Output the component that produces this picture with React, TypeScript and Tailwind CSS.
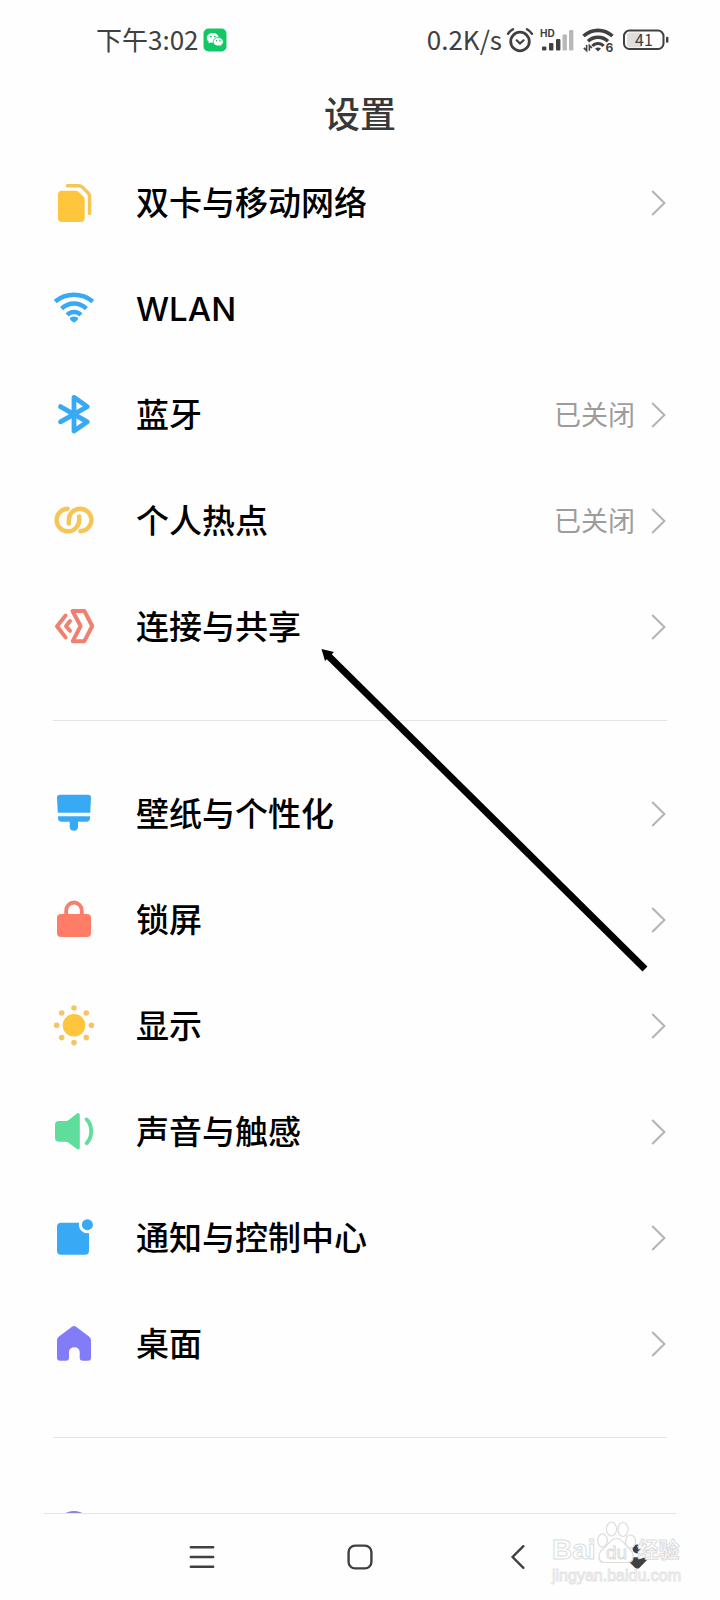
import type { ReactNode } from "react";

const BLUE = "#38aaf5";
const YELLOW = "#ffc53d";
const GOLD = "#f6c555";
const CORAL = "#ff7d66";
const GREEN = "#5fdd9d";
const PURPLE = "#837cf8";

function Icon({ children }: { children: ReactNode }) {
  return (
    <svg
      viewBox="0 0 42 42"
      className="size-[42px] shrink-0"
      fill="none"
      strokeLinecap="round"
      strokeLinejoin="round"
      aria-hidden="true"
    >
      {children}
    </svg>
  );
}

const SimIcon = () => (
  <Icon>
    <path
      d="M9 8.7H22.8Q24.5 8.7 25.7 9.9L30.5 14.6Q31.7 15.8 31.7 17.5V36Q31.7 40 27.7 40H9Q5 40 5 36V12.7Q5 8.7 9 8.7Z"
      fill={YELLOW}
    />
    <path d="M14.5 3.7H26Q27.8 3.7 29 4.9L35.2 11Q36.6 12.5 36.6 14.4V31.5" stroke={GOLD} strokeWidth="3.4" />
  </Icon>
);

const WifiIcon = () => (
  <Icon>
    <g stroke={BLUE} strokeWidth="4.5" strokeLinecap="butt">
      <path d="M2.2 13.4Q10.5 6.8 21 6.8T39.8 13.4" />
      <path d="M8.6 20.6Q14 15.4 21 15.4T33.4 20.6" />
      <path d="M14.2 27Q17 24 21 24T27.8 27" />
    </g>
    <path d="M17 29.8Q21 27.4 25 29.8Q25.6 31 24 32.4L21 34.8L18 32.4Q16.4 31 17 29.8Z" fill={BLUE} />
  </Icon>
);

const BluetoothIcon = () => (
  <Icon>
    <path
      d="M7.5 12.6L34.3 27.8L21 36.9V3.3L34.3 12.6L7.5 27.8"
      stroke={BLUE}
      strokeWidth="4.8"
    />
  </Icon>
);

const HotspotIcon = () => (
  <Icon>
    <g stroke={GOLD} strokeWidth="4.4">
      <path d="M14.6 8.7A11.3 11.3 0 1 0 26.2 20V16.5" />
      <path d="M27.4 31.3A11.3 11.3 0 1 0 15.8 20V23.5" />
    </g>
  </Icon>
);

const ShareIcon = () => (
  <Icon>
    <g stroke="#f0806f" strokeWidth="4">
      <path d="M19.5 5H31.4L39.2 20L31.4 35.2H19.8L27.6 20Z" />
      <path d="M12.6 9.6L4 20.2L12.6 31.4" />
      <path d="M17 15L13 20.2L17 24.8" />
    </g>
  </Icon>
);

const BrushIcon = () => (
  <Icon>
    <path d="M7.2 1.7H34.8Q38.2 1.7 38 5L37.2 19.7H4.8L4 5Q3.8 1.7 7.2 1.7Z" fill={BLUE} />
    <path d="M5 23.2H37V25Q37 28.7 33.4 28.7H25V34.2A4.2 4.2 0 0 1 16.7 34.2V28.7H8.6Q5 28.7 5 25Z" fill={BLUE} />
  </Icon>
);

const LockIcon = () => (
  <Icon>
    <path d="M13.2 18V11.3A7.8 7.8 0 0 1 28.8 11.3V18" stroke="#f4806f" strokeWidth="3.8" />
    <rect x="4" y="15" width="34" height="23" rx="4" fill={CORAL} />
  </Icon>
);

const SUN_RAYS = [
  [21, 3],
  [33.3, 8],
  [38.4, 20.3],
  [33.3, 32.6],
  [21, 37.6],
  [8.7, 32.6],
  [3.6, 20.3],
  [8.7, 8],
];

const SunIcon = () => (
  <Icon>
    <circle cx="21" cy="20.3" r="11.3" fill={YELLOW} />
    {SUN_RAYS.map(([x, y]) => (
      <circle key={`${x}-${y}`} cx={x} cy={y} r="2.8" fill="#f5c565" />
    ))}
  </Icon>
);

const SoundIcon = () => (
  <Icon>
    <path
      d="M6 10H12.5Q14.5 10 16 8.7L23.5 2.7Q26.8 0.8 26.8 4.2V36.2Q26.8 39.8 23.5 37.8L16 32Q14.5 30.7 12.5 30.7H6Q2 30.7 2 26.7V14Q2 10 6 10Z"
      fill={GREEN}
    />
    <path d="M33.6 8.4Q38.2 13 38.2 20.3T33.6 32.2" stroke={GREEN} strokeWidth="3.8" />
  </Icon>
);

const NoticeIcon = () => (
  <Icon>
    <rect x="4" y="5.7" width="32" height="32" rx="4" fill={BLUE} />
    <circle cx="34.4" cy="7.7" r="8.6" fill="#fefefe" />
    <circle cx="34.4" cy="7.7" r="5.5" fill={BLUE} />
  </Icon>
);

const HomeIcon = () => (
  <Icon>
    <path
      d="M18.6 4Q21 2.2 23.4 4L36 13.4Q38 15 38 17.6V34.7Q38 37.7 35 37.7H29.7Q26.7 37.7 26.7 34.7V28.8A5.4 5.4 0 0 0 16 28.8V34.7Q16 37.7 13 37.7H7Q4 37.7 4 34.7V17.6Q4 15 6 13.4Z"
      fill={PURPLE}
    />
  </Icon>
);

const RoundIcon = () => (
  <Icon>
    <circle cx="21" cy="18" r="17" fill="#8c83dc" />
  </Icon>
);

const Chevron = () => (
  <svg viewBox="0 0 16 28" className="h-7 w-4 shrink-0" fill="none" stroke="#b3b3b3" strokeWidth="2" aria-hidden="true">
    <path d="M1.2 2L13.4 14L1.2 26" />
  </svg>
);

type Item = { label: string; icon: ReactNode; value?: string; plain?: boolean };

const NETWORK: Item[] = [
  { label: "双卡与移动网络", icon: <SimIcon /> },
  { label: "WLAN", icon: <WifiIcon />, plain: true },
  { label: "蓝牙", icon: <BluetoothIcon />, value: "已关闭" },
  { label: "个人热点", icon: <HotspotIcon />, value: "已关闭" },
  { label: "连接与共享", icon: <ShareIcon /> },
];

const DEVICE: Item[] = [
  { label: "壁纸与个性化", icon: <BrushIcon /> },
  { label: "锁屏", icon: <LockIcon /> },
  { label: "显示", icon: <SunIcon /> },
  { label: "声音与触感", icon: <SoundIcon /> },
  { label: "通知与控制中心", icon: <NoticeIcon /> },
  { label: "桌面", icon: <HomeIcon /> },
];

function Group({ items }: { items: Item[] }) {
  return (
    <ul>
      {items.map((item) => (
        <li key={item.label}>
          <button type="button" className="flex h-[106px] w-full items-center text-left">
            {item.icon}
            <span className="ml-[41px] flex-1 text-[33px] leading-10 font-medium text-black [font-family:Inter,'Noto_Sans_CJK_SC',sans-serif]">
              {item.label}
            </span>
            {item.value && <span className="mr-4 pb-0.5 text-[27px] leading-10 text-[#9c9c9c]">{item.value}</span>}
            {!item.plain && <Chevron />}
          </button>
        </li>
      ))}
    </ul>
  );
}

function StatusBar() {
  return (
    <div className="flex h-20 shrink-0 items-center pr-[50px] pl-24 text-[26px] leading-10 text-[#404040]">
      <span className="pb-0.5">下午3:02</span>
      <svg viewBox="0 0 24 24" className="ml-1 size-6" aria-hidden="true">
        <rect x="0.5" y="0.5" width="23" height="23" rx="5" fill="#12c864" />
        <path d="M9.8 5C6.4 5 3.8 7.2 3.8 9.9C3.8 11.5 4.6 12.8 5.9 13.7L5.4 15.5L7.5 14.5C8.2 14.7 9 14.8 9.8 14.8C13.2 14.8 15.8 12.6 15.8 9.9S13.2 5 9.8 5Z" fill="#fff" />
        <path d="M15.2 9.6C12.3 9.6 10.1 11.5 10.1 13.8S12.3 18 15.2 18C15.9 18 16.5 17.9 17.1 17.7L18.8 18.6L18.4 17C19.6 16.2 20.3 15.1 20.3 13.8C20.3 11.5 18.1 9.6 15.2 9.6Z" fill="#fff" stroke="#12c864" strokeWidth="0.8" />
        <g fill="#12c864">
          <circle cx="7.8" cy="8.6" r="0.9" />
          <circle cx="11.8" cy="8.6" r="0.9" />
          <circle cx="13.6" cy="12.7" r="0.8" />
          <circle cx="17" cy="12.7" r="0.8" />
        </g>
      </svg>
      <div className="ml-auto flex items-center">
        <span className="pb-0.5">0.2K/s</span>
        <svg viewBox="0 0 28 26" className="ml-1 h-[26px] w-7" fill="none" stroke="#404040" strokeLinecap="round" aria-hidden="true">
          <circle cx="14" cy="14.5" r="9.3" strokeWidth="2.8" />
          <path d="M10.7 13.3L14 16.5L17.6 13.3" strokeWidth="2.2" />
          <path d="M2 6.8Q4 3.8 7 2.2M26 6.8Q24 3.8 21 2.2" strokeWidth="2.4" />
        </svg>
        <svg viewBox="0 0 34 36" className="ml-1.5 h-9 w-[34px] overflow-visible" fill="#404040" aria-hidden="true">
          <text x="0" y="15" fontSize="10" fontWeight="700" fontFamily="Inter, sans-serif">HD</text>
          <rect x="2" y="24.5" width="4.4" height="4" rx="1" />
          <rect x="9" y="21" width="4.4" height="7.5" rx="1" />
          <rect x="16" y="17" width="4.4" height="11.5" rx="1" />
          <rect x="22.5" y="12.5" width="4.4" height="16" rx="1" fill="#b8b8b8" />
          <rect x="29" y="8" width="4.4" height="20.5" rx="1" fill="#b8b8b8" />
        </svg>
        <svg viewBox="0 0 34 36" className="ml-2 h-9 w-[34px] overflow-visible" fill="none" stroke="#404040" aria-hidden="true">
          <path d="M1.5 14Q8 8.4 16 8.4T30.5 14" strokeWidth="3.6" />
          <path d="M6 19.2Q10.2 15.2 16 15.2T26 19.2" strokeWidth="3.4" />
          <path d="M10.4 24Q12.6 21.4 16 21.4T21.6 24" strokeWidth="3" />
          <path d="M13 26.5Q16 24.3 19 26.5L16 29.5Z" fill="#404040" stroke="none" />
          <path d="M4.6 23V28.5L1.8 25.8M7.4 28.8V23.5L10 26" strokeWidth="1.6" />
          <text x="23.5" y="29.5" fontSize="12" fontWeight="700" fontFamily="Inter, sans-serif" fill="#404040" stroke="none">6</text>
        </svg>
        <svg viewBox="0 0 48 26" className="ml-1.5 h-[26px] w-12" fill="none" aria-hidden="true">
          <rect x="5" y="5.5" width="15" height="15" rx="3" fill="#dedede" />
          <rect x="2" y="3.6" width="39.5" height="18.4" rx="5.5" stroke="#404040" strokeWidth="2" />
          <rect x="44" y="9.8" width="2.4" height="6" rx="1" fill="#404040" />
          <text x="22" y="18.8" textAnchor="middle" fontSize="16" fill="#404040">41</text>
        </svg>
      </div>
    </div>
  );
}

function NavBar() {
  return (
    <nav className="mx-11 grid h-[87px] shrink-0 grid-cols-[1fr_2fr_2fr_2fr_1fr] border-t border-[#e4e4e4]">
      <button type="button" aria-label="菜单" className="col-start-2 flex items-center justify-center">
        <svg viewBox="0 0 26 26" className="size-[26px]" stroke="#404040" strokeWidth="2.4" strokeLinecap="round" aria-hidden="true">
          <path d="M1.8 3.2H24.2M1.8 13H24.2M1.8 22.8H24.2" />
        </svg>
      </button>
      <button type="button" aria-label="主页" className="flex items-center justify-center">
        <svg viewBox="0 0 26 26" className="size-[26px]" fill="none" stroke="#404040" strokeWidth="2.4" aria-hidden="true">
          <rect x="1.6" y="1.6" width="22.8" height="22.8" rx="6.5" />
        </svg>
      </button>
      <button type="button" aria-label="返回" className="flex items-center justify-center">
        <svg viewBox="0 0 26 26" className="size-[26px]" fill="none" stroke="#404040" strokeWidth="2.4" strokeLinecap="round" aria-hidden="true">
          <path d="M18.4 2.2L7.6 13L18.4 23.8" />
        </svg>
      </button>
      <button type="button" aria-label="收起" className="flex items-center justify-center">
        <svg viewBox="0 0 26 26" className="size-[26px]" fill="#404040" aria-hidden="true">
          <circle cx="13" cy="5" r="4.4" />
          <path d="M4 13.2H22.5Q25 13.8 23 16L15.5 23.8Q13.2 25.6 11 23.8L3.2 16Q1.5 13.8 4 13.2Z" />
        </svg>
      </button>
    </nav>
  );
}

function Watermark() {
  return (
    <div className="pointer-events-none absolute right-[38px] bottom-3.5 flex w-[130px] flex-col text-white">
      <div className="flex h-[50px] items-end whitespace-nowrap">
        <span className="text-[28px] leading-8 font-bold [-webkit-text-stroke:1px_#dcdcdc] [font-family:'Liberation_Sans',Arial,sans-serif]">Bai</span>
        <svg viewBox="0 0 42 46" className="h-[46px] w-[42px] shrink-0" stroke="#dcdcdc" strokeWidth="1.2" aria-hidden="true">
          <g fill="#fff">
            <ellipse cx="6.5" cy="20.5" rx="4.8" ry="6.6" />
            <ellipse cx="15.5" cy="9" rx="5" ry="7" />
            <ellipse cx="27" cy="9.5" rx="5" ry="7" />
            <ellipse cx="34.5" cy="21.5" rx="5" ry="6.5" />
            <path d="M20.5 18.5C26 18.5 28 23.5 32 27.5C39 32.5 39 42.5 31 42.5H9C1 42.5 1.5 33 8 28C13 24 14.5 18.5 20.5 18.5Z" />
            <text x="20.5" y="39" textAnchor="middle" fontSize="19" fontFamily="Liberation Sans, Arial, sans-serif" strokeWidth="1">du</text>
          </g>
        </svg>
        <span className="text-[21px] leading-9 font-bold [-webkit-text-stroke:1px_#dcdcdc]">经验</span>
      </div>
      <span className="text-[16px] leading-5 [-webkit-text-stroke:1px_#e4e4e4] [font-family:'Liberation_Sans',Arial,sans-serif]">jingyan.baidu.com</span>
    </div>
  );
}

export default function App() {
  return (
    <div className="relative flex h-screen flex-col overflow-hidden bg-[#fefefe] [font-family:'Noto_Sans_CJK_SC',sans-serif]">
      <StatusBar />
      <h1 className="h-[70px] shrink-0 text-center text-[36px] leading-[64px] font-medium text-[#383838]">设置</h1>
      <main className="min-h-0 flex-1 overflow-y-auto px-[53px] [scrollbar-width:none]">
        <Group items={NETWORK} />
        <hr className="my-10 border-t border-[#e4e4e4]" />
        <Group items={DEVICE} />
        <hr className="my-10 border-t border-[#e4e4e4]" />
        <div className="flex h-[106px] items-center">
          <RoundIcon />
        </div>
      </main>
      <NavBar />
      <svg
        viewBox="0 0 330 330"
        className="pointer-events-none absolute top-[645px] left-[318px] size-[330px]"
        aria-hidden="true"
      >
        <path d="M9 9.5L327 324" stroke="#000" strokeWidth="7" />
        <path d="M3.5 4L16 7L7 16Z" fill="#000" />
      </svg>
      <Watermark />
    </div>
  );
}
